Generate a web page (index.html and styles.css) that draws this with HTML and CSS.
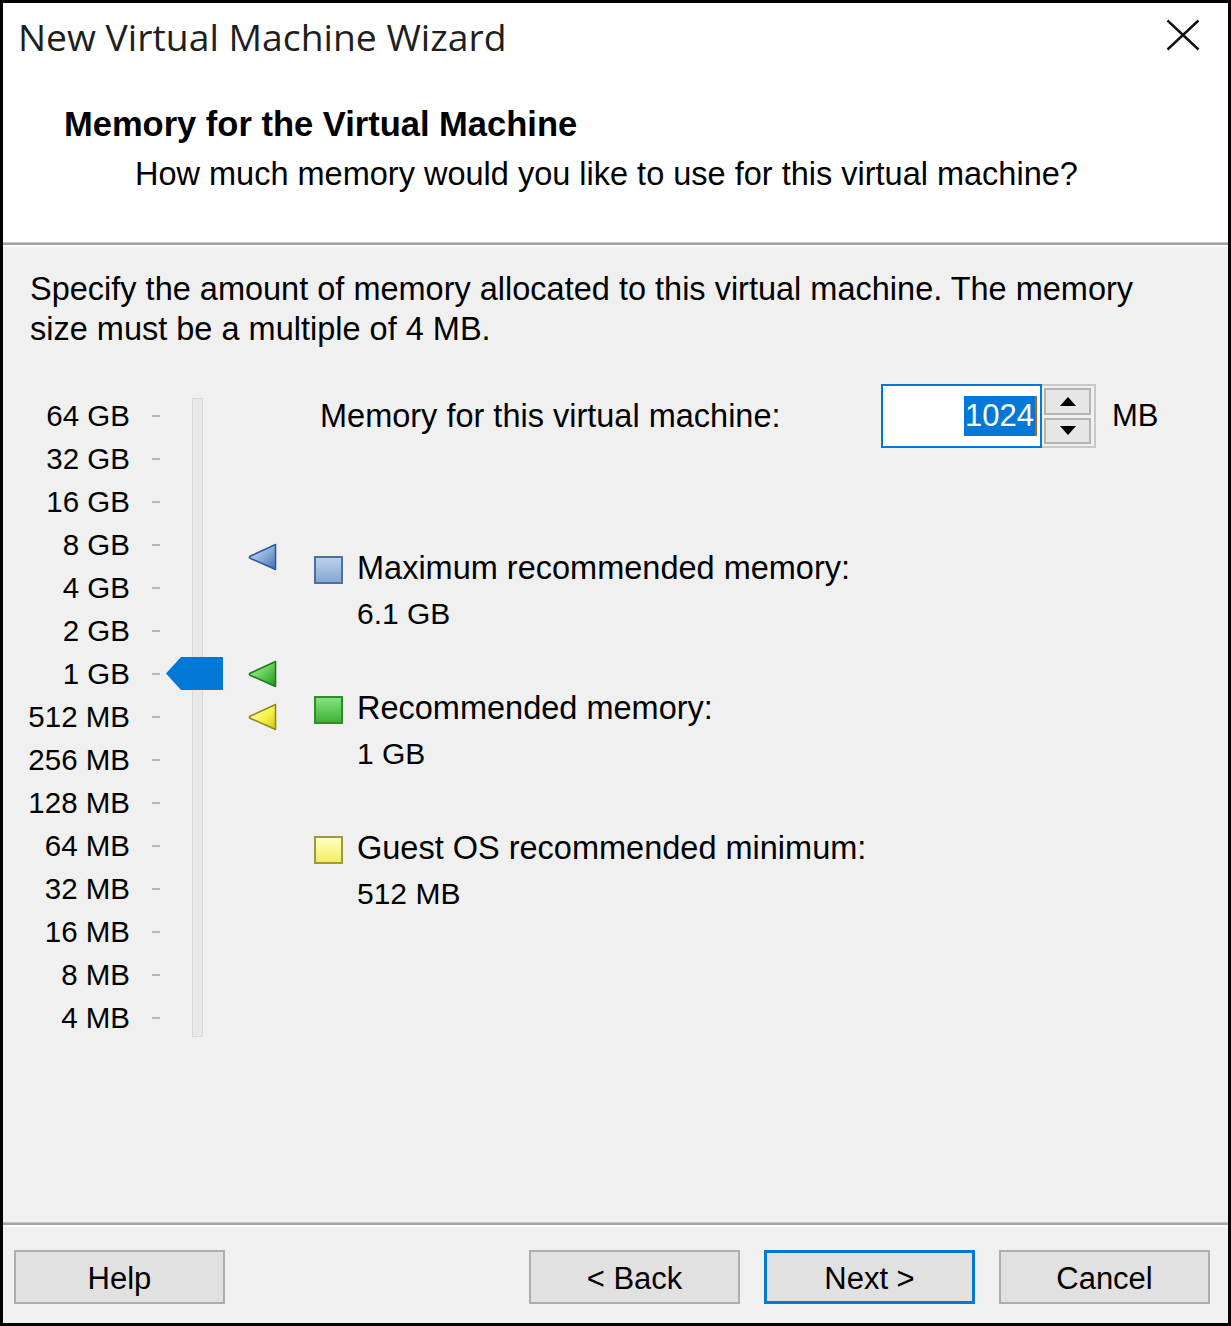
FILE: index.html
```html
<!DOCTYPE html>
<html lang="en">
<head>
<meta charset="utf-8">
<title>New Virtual Machine Wizard</title>
<link rel="stylesheet" href="styles.css">
</head>
<body>
<div class="dialog">
  <header class="header">
    <div class="titlebar">
      <span class="title">New Virtual Machine Wizard</span>
      <svg class="close" viewBox="0 0 34 32" aria-label="Close"><path d="M1.5 1.5 L32.5 30.5 M32.5 1.5 L1.5 30.5"/></svg>
    </div>
    <h1 class="heading">Memory for the Virtual Machine</h1>
    <p class="subheading">How much memory would you like to use for this virtual machine?</p>
  </header>
  <div class="rule"></div>
  <main class="content">
    <p class="intro">Specify the amount of memory allocated to this virtual machine. The memory<br>size must be a multiple of 4 MB.</p>
    <div class="memory">
      <div class="scale">
        <ul class="labels">
          <li><span>64 GB</span><i></i></li>
          <li><span>32 GB</span><i></i></li>
          <li><span>16 GB</span><i></i></li>
          <li><span>8 GB</span><i></i></li>
          <li><span>4 GB</span><i></i></li>
          <li><span>2 GB</span><i></i></li>
          <li><span>1 GB</span><i></i></li>
          <li><span>512 MB</span><i></i></li>
          <li><span>256 MB</span><i></i></li>
          <li><span>128 MB</span><i></i></li>
          <li><span>64 MB</span><i></i></li>
          <li><span>32 MB</span><i></i></li>
          <li><span>16 MB</span><i></i></li>
          <li><span>8 MB</span><i></i></li>
          <li><span>4 MB</span><i></i></li>
        </ul>
        <div class="track"></div>
        <div class="markers">
          <svg class="marker marker-max" viewBox="0 0 29 28">
            <defs><linearGradient id="gb" x1="0" y1="0" x2="1" y2="1"><stop offset="0" stop-color="#dbe7f6"/><stop offset="0.55" stop-color="#87a9d8"/><stop offset="1" stop-color="#3f6fb2"/></linearGradient></defs>
            <path d="M27.5 1.5 L27.5 26.5 L2 15.2 Q0.6 14.3 2 13.3 Z" fill="url(#gb)" stroke="#2d5b98" stroke-width="1.6" stroke-linejoin="round"/>
          </svg>
          <svg class="marker marker-rec" viewBox="0 0 29 28">
            <defs><linearGradient id="gg" x1="0" y1="0" x2="1" y2="1"><stop offset="0" stop-color="#c9f4bb"/><stop offset="0.55" stop-color="#5ccb4f"/><stop offset="1" stop-color="#22951f"/></linearGradient></defs>
            <path d="M27.5 1.5 L27.5 26.5 L2 15.2 Q0.6 14.3 2 13.3 Z" fill="url(#gg)" stroke="#1c7a1c" stroke-width="1.6" stroke-linejoin="round"/>
          </svg>
          <svg class="marker marker-min" viewBox="0 0 29 28">
            <defs><linearGradient id="gy" x1="0" y1="0" x2="1" y2="1"><stop offset="0" stop-color="#ffffd6"/><stop offset="0.55" stop-color="#f6f24a"/><stop offset="1" stop-color="#d2c800"/></linearGradient></defs>
            <path d="M27.5 1.5 L27.5 26.5 L2 15.2 Q0.6 14.3 2 13.3 Z" fill="url(#gy)" stroke="#8e8a1c" stroke-width="1.6" stroke-linejoin="round"/>
          </svg>
        </div>
        <svg class="thumb" viewBox="0 0 57 33"><polygon points="0,16.5 15,0 57,0 57,33 15,33" fill="#0078d7"/></svg>
      </div>
      <div class="panel">
        <div class="amount">
          <span class="amount-label">Memory for this virtual machine:</span>
          <div class="field"><span class="sel">1024</span><span class="caret"></span></div>
          <div class="spin">
            <div class="spin-btn"><span class="arrow-up"></span></div>
            <div class="spin-btn"><span class="arrow-down"></span></div>
          </div>
          <span class="unit">MB</span>
        </div>
        <ul class="legend">
          <li class="legend-item"><span class="swatch swatch-max"></span><div class="legend-text"><div>Maximum recommended memory:</div><div class="value">6.1 GB</div></div></li>
          <li class="legend-item"><span class="swatch swatch-rec"></span><div class="legend-text"><div>Recommended memory:</div><div class="value">1 GB</div></div></li>
          <li class="legend-item"><span class="swatch swatch-min"></span><div class="legend-text"><div>Guest OS recommended minimum:</div><div class="value">512 MB</div></div></li>
        </ul>
      </div>
    </div>
  </main>
  <div class="rule"></div>
  <footer class="buttons">
    <button class="btn btn-help">Help</button>
    <button class="btn">&lt; Back</button>
    <button class="btn btn-default">Next &gt;</button>
    <button class="btn">Cancel</button>
  </footer>
</div>
</body>
</html>
```

FILE: styles.css
```css
* { box-sizing: border-box; margin: 0; padding: 0; }

html, body { width: 1231px; height: 1326px; }

body {
  font-family: "Liberation Sans", Arial, sans-serif;
  font-size: 32.5px;
  color: #000;
  background: #000;
}

.dialog {
  width: 1231px;
  height: 1326px;
  border: 3px solid #000;
  display: flex;
  flex-direction: column;
  background: #f0f0f0;
}

/* Header */
.header {
  flex: none;
  height: 239px;
  background: #fff;
  padding: 12px 28px 0 15px;
}

.titlebar {
  display: flex;
  justify-content: space-between;
  align-items: center;
  height: 44px;
}

.title {
  font-family: "Open Sans", "Noto Sans", sans-serif;
  font-size: 37.3px;
  color: #1e1e1e;
  white-space: nowrap;
  margin-top: -2px;
}

.close {
  width: 34px;
  height: 32px;
  margin-top: -4px;
}
.close path { stroke: #111; stroke-width: 2.4; fill: none; }

.heading {
  font-size: 34.5px;
  font-weight: bold;
  line-height: 40px;
  margin: 45px 0 0 46px;
}

.subheading {
  line-height: 40px;
  margin: 10px 0 0 117px;
}

.rule {
  flex: none;
  height: 5px;
  background: linear-gradient(#c6c6c6 0 1px, #a3a3a3 1px 3px, #fafafa 3px 5px);
}

/* Content */
.content {
  flex: 1;
  padding: 22px 0 0 27px;
}

.intro { line-height: 40px; }

.memory {
  display: flex;
  align-items: flex-start;
  margin-top: 34px;
}

.scale {
  position: relative;
  display: flex;
  align-items: flex-start;
}

.labels {
  list-style: none;
  padding-top: 11.5px;
  margin-left: -10px;
}

.labels li {
  height: 43px;
  display: flex;
  align-items: center;
}

.labels span {
  width: 110px;
  text-align: right;
  font-size: 29.5px;
  white-space: nowrap;
}

.labels i {
  width: 8px;
  height: 2px;
  margin-left: 22px;
  background: #b8b8b8;
}

.track {
  width: 11px;
  height: 639px;
  margin: 15px 0 0 32px;
  background: #e8e8e8;
  border: 1px solid #d8d8d8;
}

.markers {
  position: relative;
  width: 29px;
  height: 639px;
  margin-left: 45px;
}

.marker {
  position: absolute;
  left: 0;
  width: 29px;
  height: 28px;
}
.marker-max { top: 160px; }
.marker-rec { top: 277px; }
.marker-min { top: 320px; }

.thumb {
  position: absolute;
  left: 136px;
  top: 274px;
  width: 57px;
  height: 33px;
}

/* Right panel */
.panel { margin-left: 37px; }

.amount {
  display: flex;
  align-items: center;
  height: 64px;
  margin-top: 1px;
}

.amount-label {
  width: 567px;
  padding-left: 6px;
  white-space: nowrap;
}

.field {
  width: 161px;
  height: 64px;
  border: 2px solid #0078d7;
  background: #fff;
  display: flex;
  align-items: center;
  justify-content: flex-end;
  padding-right: 3px;
}

.sel {
  background: #0078d7;
  color: #fff;
  line-height: 40px;
  height: 40px;
  padding: 0 1px;
  font-size: 31px;
}

.caret {
  width: 2px;
  height: 40px;
  background: #b5651d;
}

.spin {
  width: 54px;
  height: 64px;
  border: 2px solid #c8c8c8;
  border-left: none;
  background: #f0f0f0;
  padding: 2px 3px 2px 2px;
  display: flex;
  flex-direction: column;
  gap: 3px;
}

.spin-btn {
  flex: 1;
  background: #e6e6e6;
  border: 2px solid #b4b4b4;
  display: flex;
  align-items: center;
  justify-content: center;
}

.arrow-up {
  width: 0; height: 0;
  border-left: 8px solid transparent;
  border-right: 8px solid transparent;
  border-bottom: 9px solid #000;
}
.arrow-down {
  width: 0; height: 0;
  border-left: 8px solid transparent;
  border-right: 8px solid transparent;
  border-top: 9px solid #000;
}

.unit { margin-left: 16px; font-size: 31px; }

.legend {
  list-style: none;
  margin-top: 97.5px;
  display: flex;
  flex-direction: column;
  gap: 50px;
}

.legend-item { display: flex; align-items: flex-start; }

.swatch {
  flex: none;
  width: 29px;
  height: 28px;
  margin-top: 10.5px;
  border: 2px solid;
}
.swatch-max { border-color: #4f6f9c; background: linear-gradient(#bcd0ea, #86a7d4); }
.swatch-rec { border-color: #2e8c2b; background: linear-gradient(#86e27f, #3cb338); }
.swatch-min { border-color: #9c9a3c; background: linear-gradient(#ffffc4, #f2ec62); }

.legend-text {
  margin-left: 14px;
  line-height: 45px;
  white-space: nowrap;
}

.value { font-size: 30px; }

/* Footer */
.buttons {
  flex: none;
  height: 96px;
  display: flex;
  gap: 24px;
  padding: 23px 18px 0 11px;
}

.btn {
  width: 211px;
  height: 54px;
  padding-top: 4px;
  background: #e1e1e1;
  border: 2px solid #adadad;
  font-family: "Liberation Sans", Arial, sans-serif;
  font-size: 31px;
  color: #000;
}

.btn-help { margin-right: auto; }

.btn-default { border: 3px solid #0078d7; }
```
